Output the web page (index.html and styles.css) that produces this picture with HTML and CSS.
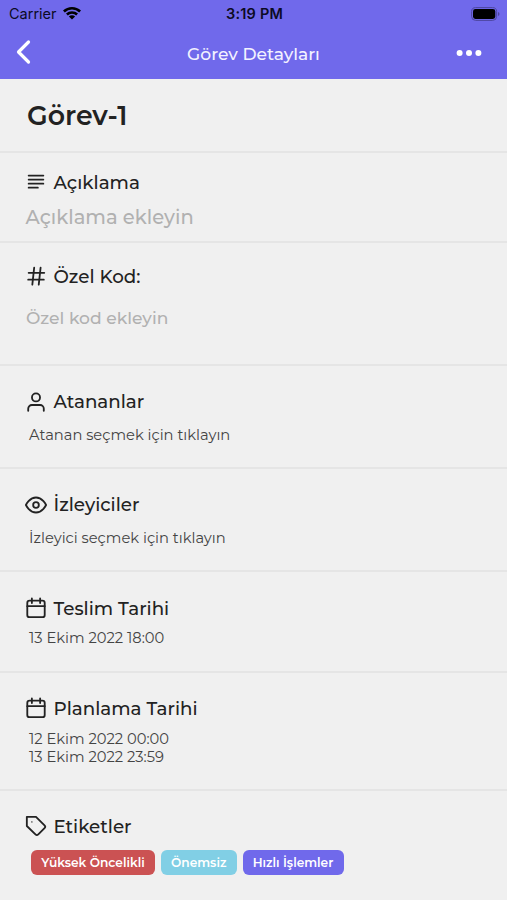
FILE: index.html
```html
<!DOCTYPE html>
<html lang="tr">
<head>
<meta charset="utf-8">
<title>Görev Detayları</title>
<link rel="stylesheet" href="styles.css">
</head>
<body>
<header class="header">
  <div class="status">
    <div class="carrier"><span>Carrier</span>
      <svg width="18" height="14" viewBox="0 0 18 14"><path d="M0 4.6a13 13 0 0 1 18 0l-1.8 1.8a10.3 10.3 0 0 0-14.4 0zM3 7.6a8.6 8.6 0 0 1 12 0l-1.8 1.8a6 6 0 0 0-8.4 0zM5.9 10.5a4.4 4.4 0 0 1 6.2 0L9 13.5z"/></svg>
    </div>
    <span class="time">3:19 PM</span>
    <svg class="battery" width="29" height="14" viewBox="0 0 29 14"><rect x=".6" y=".6" width="25" height="12.8" rx="4" fill="none" stroke="#4d469f"/><rect x="2" y="2" width="22.3" height="10" rx="2.4"/><path d="M27 5v4q1.5-.5 1.5-2T27 5z" fill="#4d469f"/></svg>
  </div>
  <nav class="nav">
    <svg class="back" width="16" height="26" viewBox="0 0 16 26"><path d="M12.5 3 2.5 13l10 10"/></svg>
    <h1 class="nav-title">Görev Detayları</h1>
    <svg class="more" width="26" height="8" viewBox="0 0 26 8"><circle cx="3.6" cy="4" r="3"/><circle cx="13" cy="4" r="3"/><circle cx="22.4" cy="4" r="3"/></svg>
  </nav>
</header>
<main>
  <section class="row title-row"><h2 class="task">Görev-1</h2></section>
  <section class="row description">
    <h3 class="label"><svg class="icon raised" viewBox="0 0 24 24"><path d="M4 5h16M4 9.4h16M4 13.8h16M4 18.2h10"/></svg><span>Açıklama</span></h3>
    <p class="placeholder large">Açıklama ekleyin</p>
  </section>
  <section class="row code">
    <h3 class="label"><svg class="icon raised" viewBox="0 0 24 24"><path d="M4 8.5h17M3.5 16h17M10 3 8 21.5M17 3l-2 18.5"/></svg><span>Özel Kod:</span></h3>
    <p class="placeholder">Özel kod ekleyin</p>
  </section>
  <section class="row assignees">
    <h3 class="label"><svg class="icon" viewBox="0 0 24 24"><path d="M3.5 21.5v-2.2a4 4 0 0 1 4-4h9a4 4 0 0 1 4 4v2.2"/><circle cx="12" cy="7" r="4.4"/></svg><span>Atananlar</span></h3>
    <p class="value">Atanan seçmek için tıklayın</p>
  </section>
  <section class="row watchers">
    <h3 class="label"><svg class="icon" viewBox="0 0 24 24"><path d="M1 12s4-8.2 11-8.2S23 12 23 12s-4 8.2-11 8.2S1 12 1 12z"/><circle cx="12" cy="12" r="3.1"/></svg><span>İzleyiciler</span></h3>
    <p class="value">İzleyici seçmek için tıklayın</p>
  </section>
  <section class="row due">
    <h3 class="label"><svg class="icon raised" viewBox="0 0 24 24"><rect x="2.5" y="4" width="19" height="18" rx="2.5"/><path d="M7.5 1.5v5M16.5 1.5v5M2.5 10h19"/></svg><span>Teslim Tarihi</span></h3>
    <p class="value date">13 Ekim 2022 18:00</p>
  </section>
  <section class="row plan">
    <h3 class="label"><svg class="icon raised" viewBox="0 0 24 24"><rect x="2.5" y="4" width="19" height="18" rx="2.5"/><path d="M7.5 1.5v5M16.5 1.5v5M2.5 10h19"/></svg><span>Planlama Tarihi</span></h3>
    <p class="value date">12 Ekim 2022 00:00<br>13 Ekim 2022 23:59</p>
  </section>
  <section class="row tags">
    <h3 class="label"><svg class="icon raised" viewBox="0 0 24 24"><path d="M2 2h10l9.3 9.3a2.2 2.2 0 0 1 0 3.1l-6.8 6.8a2.2 2.2 0 0 1-3.1 0L2 12z"/><path class="hole" d="M7.5 7.5h.01"/></svg><span>Etiketler</span></h3>
    <div class="chips"><span class="chip red">Yüksek Öncelikli</span><span class="chip blue">Önemsiz</span><span class="chip purple">Hızlı İşlemler</span></div>
  </section>
</main>
</body>
</html>
```
FILE: styles.css
```css
* { box-sizing: border-box; }
body { margin: 0; height: 900px; overflow: hidden; background: #f0f0f0; color: #222; font-family: Montserrat, Inter, sans-serif; }
h1, h2, h3, p { margin: 0; font-weight: 500; white-space: nowrap; }
svg { display: block; flex: none; }
.header { height: 79px; background: #7069eb; }
.status { height: 27px; display: grid; grid-template-columns: 1fr auto 1fr; align-items: center; padding: 0 7px 0 9px; font-family: Inter, sans-serif; font-size: 14.5px; color: #0c0b24; }
.carrier { display: flex; align-items: center; gap: 6px; }
.carrier svg { margin-top: -2px; }
.time { font-weight: 600; letter-spacing: .2px; }
.battery { justify-self: end; }
.nav { height: 52px; display: grid; grid-template-columns: 1fr auto 1fr; align-items: center; padding: 0 20.5px 0 20.5px; }
.back { fill: none; stroke: #fff; stroke-width: 3.2; stroke-linecap: round; stroke-linejoin: round; margin: -2px 0 0 -4.5px; }
.nav-title { color: #f3f2ff; font-size: 17.1px; }
.more { justify-self: end; fill: #fff; margin: -1px 4.5px 0 0; }
.row { border-bottom: 2px solid #e5e5e5; padding-left: 25px; }
.title-row { height: 74px; display: flex; align-items: center; }
.task { font-size: 26.8px; font-weight: 600; line-height: 32px; padding: 2px 0 0 2px; }
.label { display: flex; align-items: center; gap: 6.5px; height: 24px; font-size: 18.3px; line-height: 24px; }
.icon { width: 22px; height: 22px; fill: none; stroke: #222; stroke-width: 2; stroke-linecap: round; stroke-linejoin: round; }
.raised { margin-top: -2px; }
.hole { stroke-width: 1.6; }
.description { height: 90px; padding-top: 18px; }
.code { height: 123px; padding-top: 22px; }
.assignees { height: 103px; padding-top: 24px; }
.watchers { height: 103px; padding-top: 24px; }
.due { height: 101px; padding-top: 25px; }
.plan { height: 118px; padding-top: 24px; }
.tags { border: 0; padding-top: 24px; }
.placeholder { color: #b1b1b1; font-size: 17.1px; line-height: 22px; margin-top: 18px; padding-left: 1px; }
.placeholder.large { font-size: 19.5px; line-height: 26px; margin-top: 9px; padding-left: .5px; }
.value { color: #444; font-size: 14.7px; font-weight: 400; line-height: 18px; margin-top: 12px; padding-left: 4px; }
.date { margin-top: 8px; }
.plan .date { margin-top: 9px; }
.chips { display: flex; gap: 6px; margin: 11px 0 0 6px; }
.chip { height: 25px; border-radius: 6px; display: flex; align-items: center; justify-content: center; color: #fff; font-size: 12.2px; font-weight: 600; white-space: nowrap; }
.red { width: 124px; background: #cb5253; }
.blue { width: 75.5px; background: #81cfe5; }
.purple { width: 101px; background: #7069eb; }
```
